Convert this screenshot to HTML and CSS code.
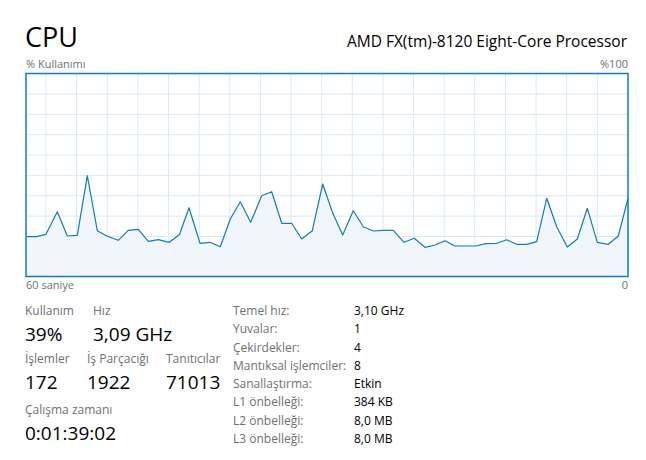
FILE: index.html
```html
<!DOCTYPE html>
<html lang="tr">
  <head>
    <meta charset="UTF-8" />
    <meta name="viewport" content="width=device-width, initial-scale=1.0" />
    <title>CPU</title>
    <link rel="stylesheet" href="styles.css">
  </head>
  <body>
    <div class="panel">
      <div class="header">
        <h1 class="title">CPU</h1>
        <div class="model">AMD FX(tm)-8120 Eight-Core Processor</div>
      </div>
      <div class="axis axis-top">
        <span>% Kullanımı</span>
        <span>%100</span>
      </div>
      <svg class="chart" width="605" height="206" viewBox="25 72 605 206">
        <g class="grid">
          <line x1="26" y1="94" x2="628" y2="94" />
          <line x1="26" y1="114.4" x2="628" y2="114.4" />
          <line x1="26" y1="134.7" x2="628" y2="134.7" />
          <line x1="26" y1="155" x2="628" y2="155" />
          <line x1="26" y1="175.4" x2="628" y2="175.4" />
          <line x1="26" y1="195.8" x2="628" y2="195.8" />
          <line x1="26" y1="216.1" x2="628" y2="216.1" />
          <line x1="26" y1="236.5" x2="628" y2="236.5" />
          <line x1="26" y1="256.8" x2="628" y2="256.8" />
          <line x1="46" y1="73" x2="46" y2="276" />
          <line x1="76.6" y1="73" x2="76.6" y2="276" />
          <line x1="107.3" y1="73" x2="107.3" y2="276" />
          <line x1="137.9" y1="73" x2="137.9" y2="276" />
          <line x1="168.5" y1="73" x2="168.5" y2="276" />
          <line x1="199.2" y1="73" x2="199.2" y2="276" />
          <line x1="229.8" y1="73" x2="229.8" y2="276" />
          <line x1="260.4" y1="73" x2="260.4" y2="276" />
          <line x1="291" y1="73" x2="291" y2="276" />
          <line x1="321.7" y1="73" x2="321.7" y2="276" />
          <line x1="352.3" y1="73" x2="352.3" y2="276" />
          <line x1="383" y1="73" x2="383" y2="276" />
          <line x1="413.6" y1="73" x2="413.6" y2="276" />
          <line x1="444.2" y1="73" x2="444.2" y2="276" />
          <line x1="474.8" y1="73" x2="474.8" y2="276" />
          <line x1="505.5" y1="73" x2="505.5" y2="276" />
          <line x1="536.1" y1="73" x2="536.1" y2="276" />
          <line x1="566.7" y1="73" x2="566.7" y2="276" />
          <line x1="597.3" y1="73" x2="597.3" y2="276" />
        </g>
        <polygon class="area" points="26.7,236.7 36.7,236.7 46,234.3 57.3,211.7 67.3,236 77.3,235.3 87.3,175.7 97.3,230.7 107.3,236.3 118.3,240.3 128.3,230.3 138.3,229.3 148.3,241.3 158.3,239.7 169.3,242.3 179.5,234.5 189,207.7 200,243.3 210,242.3 220.3,246.7 230.3,219 240.3,201.7 250.7,222.3 261.7,195.7 271.7,191.7 281.7,223.3 291.7,223.3 301.7,239 312.3,230.7 322.7,184 332.7,213 342.7,235 353.3,210.7 363.3,226.7 373.3,231 383.3,230.3 393.3,230.3 404,242.3 414.3,238.3 425,247.3 435,245 445,240.7 455,246 465,246 475.7,246 486,243.7 496.7,243.3 506.7,239.7 516.7,244.3 526.7,244.3 536.7,241.7 546.7,198.3 556.7,226.7 567.3,247 577.3,239 587.3,208.3 597.3,242.3 608.3,244.3 618.3,236 628,198.3 628,276 26,276" />
        <polyline class="line" points="26.7,236.7 36.7,236.7 46,234.3 57.3,211.7 67.3,236 77.3,235.3 87.3,175.7 97.3,230.7 107.3,236.3 118.3,240.3 128.3,230.3 138.3,229.3 148.3,241.3 158.3,239.7 169.3,242.3 179.5,234.5 189,207.7 200,243.3 210,242.3 220.3,246.7 230.3,219 240.3,201.7 250.7,222.3 261.7,195.7 271.7,191.7 281.7,223.3 291.7,223.3 301.7,239 312.3,230.7 322.7,184 332.7,213 342.7,235 353.3,210.7 363.3,226.7 373.3,231 383.3,230.3 393.3,230.3 404,242.3 414.3,238.3 425,247.3 435,245 445,240.7 455,246 465,246 475.7,246 486,243.7 496.7,243.3 506.7,239.7 516.7,244.3 526.7,244.3 536.7,241.7 546.7,198.3 556.7,226.7 567.3,247 577.3,239 587.3,208.3 597.3,242.3 608.3,244.3 618.3,236 628,198.3" />
        <rect class="frame" x="26" y="73.5" width="602" height="203" />
      </svg>
      <div class="axis axis-bottom">
        <span>60 saniye</span>
        <span>0</span>
      </div>
      <div class="stats">
        <div class="live">
          <div class="row">
            <div class="stat w-usage">
              <div class="label">Kullanım</div>
              <div class="value">39%</div>
            </div>
            <div class="stat">
              <div class="label">Hız</div>
              <div class="value">3,09 GHz</div>
            </div>
          </div>
          <div class="row">
            <div class="stat w-proc">
              <div class="label">İşlemler</div>
              <div class="value">172</div>
            </div>
            <div class="stat w-threads">
              <div class="label">İş Parçacığı</div>
              <div class="value">1922</div>
            </div>
            <div class="stat">
              <div class="label">Tanıtıcılar</div>
              <div class="value">71013</div>
            </div>
          </div>
          <div class="row row-last">
            <div class="stat">
              <div class="label">Çalışma zamanı</div>
              <div class="value">0:01:39:02</div>
            </div>
          </div>
        </div>
        <dl class="specs">
          <dt>Temel hız:</dt><dd>3,10 GHz</dd>
          <dt>Yuvalar:</dt><dd>1</dd>
          <dt>Çekirdekler:</dt><dd>4</dd>
          <dt>Mantıksal işlemciler:</dt><dd>8</dd>
          <dt>Sanallaştırma:</dt><dd>Etkin</dd>
          <dt>L1 önbelleği:</dt><dd>384 KB</dd>
          <dt>L2 önbelleği:</dt><dd>8,0 MB</dd>
          <dt>L3 önbelleği:</dt><dd>8,0 MB</dd>
        </dl>
      </div>
    </div>
  </body>
</html>
```

FILE: styles.css
```css
body {
  margin: 0;
  background: #fff;
  color: #000;
  font-family: "Open Sans", "Noto Sans", sans-serif;
}
.panel {
  width: 605px;
  padding: 18px 0 0 25px;
}
.header {
  display: flex;
  justify-content: space-between;
  align-items: baseline;
  height: 38px;
  padding-right: 3px;
}
.title {
  margin: 0;
  font-size: 27px;
  font-weight: 400;
  line-height: 38px;
}
.model {
  font-size: 15.5px;
}
.axis {
  display: flex;
  justify-content: space-between;
  font-size: 11px;
  color: #707070;
  padding: 0 2px 0 1px;
}
.axis-top {
  height: 16px;
  line-height: 16px;
}
.axis-bottom {
  height: 14px;
  line-height: 14px;
}
.chart {
  display: block;
}
.grid line {
  stroke: #d9eaf4;
  stroke-width: 1;
}
.area {
  fill: #f1f6fa;
}
.line {
  fill: none;
  stroke: #117dbb;
  stroke-width: 1.2;
  stroke-linejoin: round;
}
.frame {
  fill: none;
  stroke: #117dbb;
  stroke-width: 1.5;
}
.stats {
  display: flex;
  padding-top: 10px;
}
.live {
  width: 208px;
}
.row {
  display: flex;
  margin-bottom: 4px;
}
.row-last {
  margin-top: 7px;
}
.stat .label {
  font-size: 12px;
  color: #707070;
  line-height: 17px;
}
.stat .value {
  margin-top: 3px;
  font-size: 19px;
  line-height: 24px;
}
.w-usage {
  width: 68px;
}
.w-proc {
  width: 62px;
}
.w-threads {
  width: 79px;
}
.specs {
  display: grid;
  grid-template-columns: 121px auto;
  grid-auto-rows: 18.3px;
  margin: 0;
  font-size: 12px;
  line-height: 18.3px;
}
.specs dt {
  color: #707070;
}
.specs dd {
  margin: 0;
  color: #000;
}
```
